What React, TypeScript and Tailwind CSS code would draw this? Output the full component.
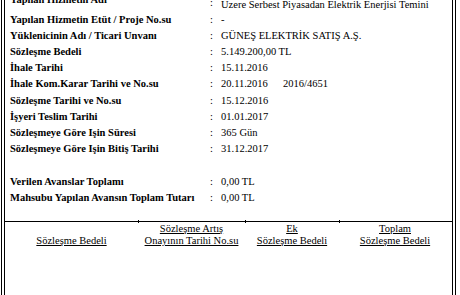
const rows: { label: string; value: string; extra?: string }[] = [
  { label: "Yapılan Hizmetin Etüt / Proje No.su", value: "-" },
  { label: "Yüklenicinin Adı / Ticari Unvanı", value: "GÜNEŞ ELEKTRİK SATIŞ A.Ş." },
  { label: "Sözleşme Bedeli", value: "5.149.200,00 TL" },
  { label: "İhale Tarihi", value: "15.11.2016" },
  { label: "İhale Kom.Karar Tarihi ve No.su", value: "20.11.2016", extra: "2016/4651" },
  { label: "Sözleşme Tarihi ve No.su", value: "15.12.2016" },
  { label: "İşyeri Teslim Tarihi", value: "01.01.2017" },
  { label: "Sözleşmeye Göre Işin Süresi", value: "365 Gün" },
  { label: "Sözleşmeye Göre Işin Bitiş Tarihi", value: "31.12.2017" },
];

const avans = [
  { label: "Verilen Avanslar Toplamı", value: "0,00 TL" },
  { label: "Mahsubu Yapılan Avansın Toplam Tutarı", value: "0,00 TL" },
];

const columns = [
  { lines: ["", "Sözleşme Bedeli"], tick: false },
  { lines: ["Sözleşme Artış", "Onayının Tarihi No.su"], tick: true },
  { lines: ["Ek", "Sözleşme Bedeli"], tick: true },
  { lines: ["Toplam", "Sözleşme Bedeli"], tick: true },
];

function Row({ label, value, extra }: { label: string; value: string; extra?: string }) {
  return (
    <div className="grid h-[16.2px] grid-cols-[200px_11px_1fr] items-center">
      <span className="whitespace-nowrap font-bold">{label}</span>
      <span>:</span>
      <span className="whitespace-nowrap">
        {extra ? (
          <>
            <span className="inline-block w-[62px]">{value}</span>
            {extra}
          </>
        ) : (
          value
        )}
      </span>
    </div>
  );
}

export default function App() {
  return (
    <div
      className="h-[295px] w-[460px] overflow-hidden bg-white pl-[1px] text-[10.5px] leading-[16.2px] text-black"
      style={{ fontFamily: '"Liberation Serif", "Times New Roman", serif' }}
    >
      <div className="h-full w-[455px] border-x border-black px-[2px]">
        <div className="flex h-full flex-col border-x border-black">
          <div className="pl-[5px]">
            <div className="-mt-[3px] grid h-[14.7px] grid-cols-[200px_11px_1fr] items-start">
              <span className="-mt-[5.3px] whitespace-nowrap font-bold">Yapılan Hizmetin Adı</span>
              <span className="-mt-[2px]">:</span>
              <span className="whitespace-nowrap">Üzere Serbest Piyasadan Elektrik Enerjisi Temini</span>
            </div>
            {rows.map((r) => (
              <Row key={r.label} {...r} />
            ))}
            <div className="h-[16.2px]" />
            {avans.map((r) => (
              <Row key={r.label} {...r} />
            ))}
          </div>

          <div className="mt-[15px] grid grid-cols-[133px_107px_94px_112px] border-t border-black pt-[1px] leading-[12px]">
            {columns.map((c, i) => (
              <div key={i} className="relative flex flex-col items-center">
                {c.tick ? (
                  <span className="absolute -top-[3px] left-0 h-[3px] w-px bg-black" />
                ) : null}
                {c.lines.map((l, j) => (
                  <span key={j} className="h-[12px] whitespace-nowrap underline underline-offset-[1px]">
                    {l}
                  </span>
                ))}
              </div>
            ))}
          </div>
        </div>
      </div>
    </div>
  );
}
